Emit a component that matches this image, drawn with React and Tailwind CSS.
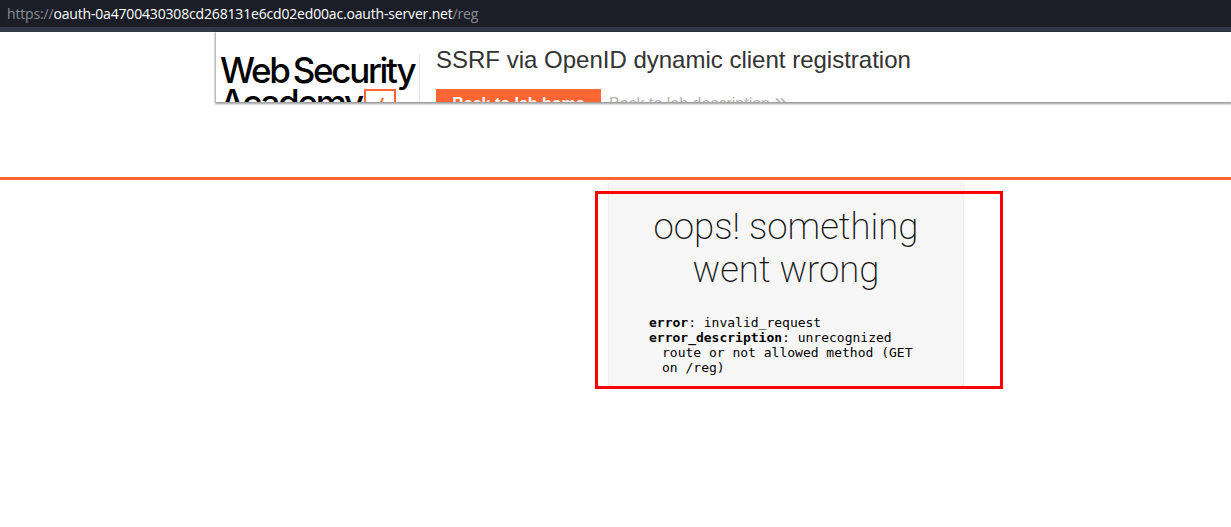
export default function App() {
    return (
        <div className="relative h-[527px] w-[1231px] overflow-hidden bg-white font-['Liberation_Sans',sans-serif]">
            {/* Browser address bar */}
            <div className="flex h-[27px] items-center bg-[#1b1e26] pl-[7px] font-['Open_Sans',sans-serif] text-[14px] tracking-[-0.17px] text-white">
                <span className="text-[#8a8d93]">https://</span>
                <span>oauth-0a4700430308cd268131e6cd02ed00ac.oauth-server.net</span>
                <span className="text-[#8a8d93]">/reg</span>
            </div>
            <div className="h-[5px] bg-[#32374a]"></div>

            {/* Lab header */}
            <div className="ml-[216px] flex h-[70px] overflow-hidden bg-white shadow-[0_1px_2px_1px_rgba(0,0,0,0.4)]">
                <div className="mt-[22px] h-[60px] w-[204px] shrink-0 border-r border-[#e6e6e6] pl-[4px] font-['Inter',sans-serif] text-[35px] leading-[32px] font-medium tracking-[-2.3px] text-black">
                    <div className="whitespace-nowrap [word-spacing:-3px]">Web Security</div>
                    <div className="flex items-start gap-[2px] whitespace-nowrap">
                        Academy
                        <svg className="mt-[3px] shrink-0" width="32" height="32" viewBox="0 0 32 32" fill="none">
                            <rect x="1" y="1" width="30" height="30" stroke="#ff6633" strokeWidth="2" />
                            <path d="M8 15l5 6 6-12" stroke="#ff6633" strokeWidth="2" />
                        </svg>
                    </div>
                </div>
                <div className="ml-[16px] pt-[12px]">
                    <h2 className="text-[24px] leading-[32px] whitespace-nowrap text-[#333332]">SSRF via OpenID dynamic client registration</h2>
                    <div className="mt-[13px] flex items-start">
                        <a className="h-[40px] w-[165px] bg-[#ff6633] pt-[3px] text-center text-[16px] font-bold text-white">Back to lab home</a>
                        <a className="mt-[3px] ml-[8px] text-[16px] whitespace-nowrap text-[#b3b3b3]">Back to lab description <span className="text-[22px] leading-[16px]">&raquo;</span></a>
                    </div>
                </div>
            </div>

            <div className="mt-[75px] h-[3px] bg-[#ff6633]"></div>

            {/* Error card */}
            <div className="mt-[1px] ml-[609px] h-[205px] w-[354px] rounded-[3px] bg-[#f6f6f6] pt-[24px] pl-[40px] shadow-[0_1px_2px_rgba(0,0,0,0.25)]">
                <h1 className="-ml-[40px] text-center font-['Roboto',sans-serif] text-[36.6px] leading-[43px] font-extralight text-[#111111]">oops! something<br />went wrong</h1>
                <div className="mt-[24px] font-['DejaVu_Sans_Mono',monospace] text-[13px] leading-[15px] whitespace-pre text-black">
                    <div><b>error</b>: invalid_request</div>
                    <div><b>error_description</b>: unrecognized</div>
                    <div className="pl-[13px]">route or not allowed method (GET</div>
                    <div className="pl-[13px]">on /reg)</div>
                </div>
            </div>

            {/* Annotation drawn over the screenshot */}
            <div className="absolute top-[191px] left-[595px] h-[198px] w-[408px] border-[3px] border-[#ff0000]"></div>
        </div>
    );
}
